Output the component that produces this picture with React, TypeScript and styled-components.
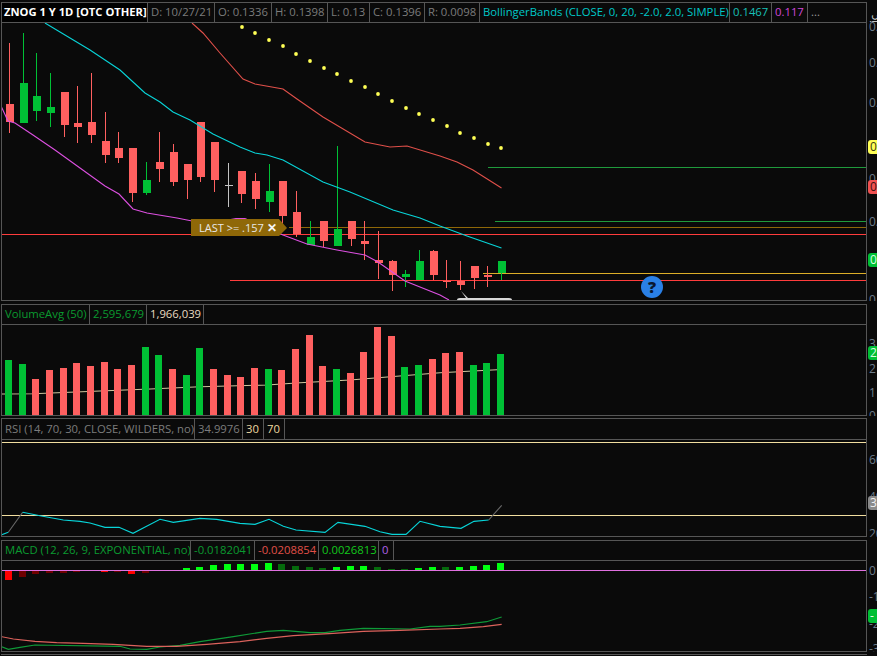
import React from 'react'
import styled, { createGlobalStyle } from 'styled-components'

const RED = '#ff6060'
const GREEN = '#00c035'
const DOJI = '#c4c4c4'
const LINE = '#565656'

const GlobalStyle = createGlobalStyle`
  html, body {
    margin: 0;
    padding: 0;
    background: #0a0a0a;
    overflow: hidden;
  }
`

const Screen = styled.div`
  width: 877px;
  height: 656px;
  padding: 2px 0 0 1px;
  box-sizing: border-box;
  background: #0a0a0a;
  font-family: "Open Sans", "Liberation Sans", sans-serif;
  font-size: 11.3px;
  overflow: hidden;
`

const Row = styled.div<{ $height: number; $gap: number }>`
  display: flex;
  height: ${p => p.$height}px;
  margin-bottom: ${p => p.$gap}px;
`

const Pane = styled.div`
  width: 866px;
  box-sizing: border-box;
  display: flex;
  flex-direction: column;
  border: 1px solid ${LINE};
`

const Legend = styled.div<{ $height: number; $line?: number }>`
  display: flex;
  flex: none;
  height: ${p => p.$height}px;
  line-height: ${p => p.$line ?? 18}px;
  border-bottom: 1px solid ${LINE};
  box-sizing: border-box;
`

const Cell = styled.div<{ $w: number; $color?: string; $title?: boolean; $open?: boolean }>`
  flex: none;
  width: ${p => p.$w}px;
  box-sizing: border-box;
  padding-left: ${p => (p.$title ? 2 : 3)}px;
  white-space: nowrap;
  overflow: hidden;
  color: ${p => p.$color ?? '#7c7c7c'};
  font-weight: ${p => (p.$title ? 700 : 400)};
  font-size: ${p => (p.$title ? '11.2px' : 'inherit')};
  background: ${p => (p.$title ? '#000' : 'transparent')};
  border-right: ${p => (p.$open ? 'none' : `1px solid ${LINE}`)};
`

const Plot = styled.div`
  position: relative;
  flex: 1;
  min-height: 0;
  overflow: hidden;

  svg {
    display: block;
    width: 864px;
    height: 100%;
  }
`

const AlertTag = styled.div`
  position: absolute;
  left: 189px;
  top: 196px;
  width: 96px;
  height: 17px;
  padding-left: 8px;
  box-sizing: border-box;
  display: flex;
  align-items: center;
  gap: 3px;
  background: #8f6808;
  color: #e8e8e8;
  font-size: 11px;
  line-height: 17px;
  clip-path: polygon(0 0, 88px 0, 96px 9px, 88px 17px, 0 17px);
`

const TagClose = styled.span`
  color: #f6f6f6;
  font-size: 12px;
  font-weight: 700;
`

const HelpBadge = styled.div`
  position: absolute;
  left: 639px;
  top: 253px;
  width: 22px;
  height: 22px;
  border-radius: 50%;
  background: #2a80e6;
  color: #0a1830;
  font-size: 16px;
  font-weight: 800;
  line-height: 22px;
  text-align: center;
`

const Axis = styled.div`
  position: relative;
  width: 10px;
  overflow: hidden;
  flex: none;
  font-size: 12px;
`

const Tick = styled.span<{ $y: number }>`
  position: absolute;
  left: 2px;
  top: ${p => p.$y}px;
  line-height: 14px;
  color: #6d7c8a;
  white-space: nowrap;
`

const Pin = styled.span<{ $y: number; $bg: string; $fg: string }>`
  position: absolute;
  left: 1px;
  top: ${p => p.$y}px;
  width: 16px;
  height: 14px;
  padding-left: 2px;
  box-sizing: border-box;
  border-radius: 3px;
  background: ${p => p.$bg};
  color: ${p => p.$fg};
  line-height: 14px;
`

const SideLabel = styled.span`
  position: absolute;
  left: 1px;
  top: 3px;
  color: #e6e6e6;
  font-size: 11px;
  line-height: 11px;
  transform: rotate(-90deg) translateX(-6px);
  transform-origin: 6px 6px;
`

const BottomRule = styled.div`
  width: 866px;
  border-top: 1px solid ${LINE};
`

type Candle = [number, number, number, number, string]

// high, low, body top, body bottom, colour (page pixels)
const candles: Candle[] = [
  [43, 133, 104, 122, RED],
  [33, 123, 83, 123, GREEN],
  [53, 121, 96, 111, GREEN],
  [73, 127, 107, 113, GREEN],
  [92, 137, 92, 125, RED],
  [86, 143, 123, 127, RED],
  [73, 143, 122, 135, RED],
  [112, 163, 141, 155, RED],
  [132, 163, 148, 158, RED],
  [148, 202, 148, 193, RED],
  [162, 195, 180, 193, GREEN],
  [132, 182, 162, 169, RED],
  [144, 186, 152, 182, RED],
  [164, 199, 164, 180, RED],
  [122, 182, 122, 177, RED],
  [142, 192, 142, 180, RED],
  [163, 207, 185, 186, DOJI],
  [171, 203, 171, 194, RED],
  [173, 209, 181, 199, RED],
  [164, 212, 191, 202, GREEN],
  [181, 225, 181, 216, RED],
  [191, 237, 212, 234, RED],
  [221, 245, 237, 245, GREEN],
  [221, 247, 221, 241, RED],
  [146, 246, 229, 246, GREEN],
  [221, 246, 221, 239, RED],
  [221, 260, 241, 244, RED],
  [231, 279, 260, 263, RED],
  [260, 291, 261, 275, RED],
  [270, 287, 274, 277, GREEN],
  [250, 280, 261, 280, GREEN],
  [250, 280, 251, 275, RED],
  [260, 288, 281, 282, RED],
  [261, 290, 281, 285, RED],
  [266, 289, 266, 278, RED],
  [266, 287, 275, 277, RED],
  [261, 280, 261, 273, GREEN],
]

const volumeTops = [
  360, 364, 379, 370, 368, 363, 366, 362, 369, 365, 347, 355, 369, 375, 348, 369, 375, 377, 368,
  369, 370, 349, 335, 366, 369, 373, 352, 327, 336, 367, 365, 359, 353, 352, 365, 363, 354,
]
const volumeColors = 'GGRRRRRRRRGGRGGRRRRGRRRRGRRRRGGRRRGGG'

// signed height above the zero line, bright or dark shade
const macdBars: [number, boolean][] = [
  [-10, true], [-7, false], [-4, false], [-3, false], [-3, false], [-2, false], [-1, false],
  [-2, true], [-2, false], [-4, true], [-3, false], [-1, false], [0, false], [2, true], [3, true],
  [5, true], [6, true], [6, true], [6, true], [7, true], [6, false], [4, false], [3, false],
  [2, false], [3, true], [4, true], [4, true], [3, false], [1, false], [1, false], [2, true],
  [3, true], [3, false], [3, true], [4, true], [5, true], [7, true],
]

const slot = (i: number) => 13.67 * i

const pts = (list: number[][]) => list.map(p => p.join(',')).join(' ')

const zoomPts = (list: number[][], ox: number, oy: number) =>
  pts(list.map(([x, y]) => [ox + x / 3, oy + y / 3]))

const upperBand = [
  [192, 23], [203, 33], [220, 53], [243, 79], [255, 84], [283, 89], [297, 99], [323, 117], [365, 142],
  [390, 147], [407, 146], [440, 156], [457, 162], [473, 170], [501.5, 188],
]
const midBand = [
  [45, 23], [65, 35], [90, 50], [105, 60], [120, 70], [145, 93], [160, 102], [173, 112], [190, 120],
  [213, 134], [240, 147], [255, 153], [267, 155], [283, 160], [323, 182], [350, 192], [393, 210],
  [420, 218], [440, 226], [467, 236], [501.5, 248],
]
const lowerBand = [
  [1, 106], [8, 121], [15, 123], [33, 135], [55, 150], [105, 186], [119, 194], [133, 209], [147, 213],
  [177, 218], [192, 221], [228, 220], [236, 218.5], [245, 218.5], [283, 235], [307, 244], [337, 250], [365, 255],
  [378, 262], [405, 281], [440, 295], [449, 300],
]
const sarDots = [
  [242, 27], [255, 33], [269, 40], [283, 46], [296, 54], [310, 61], [324, 68], [337, 74], [351, 81],
  [365, 87], [378, 94], [392, 101], [406, 108], [419, 114], [433, 120], [447, 126], [460, 133],
  [474, 138], [488, 144], [501, 148],
]

const priceLines: [number, number, string][] = [
  [167.5, 488, '#1f9a3c'],
  [221.5, 495, '#1f9a3c'],
  [227.5, 289, '#8f6808'],
  [234.5, 2, '#ff3c3c'],
  [273.5, 483, '#dcae28'],
  [280.5, 230, '#ff3c3c'],
]

const volumeAvg = [
  [0, 394], [33, 393.7], [100, 391], [150, 389], [200, 386.7], [267, 385], [300, 382.7], [350, 380],
  [440, 372.7], [497, 369.7],
]

const rsiLeft = [
  [68, 277], [120, 287], [190, 300], [240, 304], [270, 309], [315, 322], [357, 322], [399, 340],
  [480, 298], [520, 307], [600, 295], [650, 298], [720, 310], [765, 313], [807, 298], [850, 319],
  [888, 330], [975, 337], [1014, 307], [1095, 319], [1140, 335], [1176, 343], [1218, 343], [1260, 304],
  [1320, 319], [1383, 325], [1422, 304], [1466, 300],
]

const macdGreen = [
  [0, 333], [25, 343], [60, 337], [105, 330], [360, 334], [390, 342], [440, 343], [480, 336], [540, 331],
  [600, 320], [700, 305], [800, 289], [850, 286], [930, 293], [975, 293], [1020, 286], [1090, 280],
  [1150, 281], [1230, 282], [1290, 274], [1320, 274], [1380, 270], [1460, 260], [1505, 246],
]
const macdRed = [
  [0, 304], [40, 312], [105, 319], [170, 323], [250, 325], [340, 328], [440, 334], [530, 334], [620, 328],
  [720, 320], [800, 310], [880, 302], [1000, 295], [1090, 289], [1200, 286], [1320, 282], [1380, 280],
  [1450, 275], [1505, 268],
]

const Trace: React.FC<{ points: string; color: string; width?: number }> = ({ points, color, width = 1.1 }) => (
  <polyline points={points} fill="none" stroke={color} strokeWidth={width} />
)

const PriceChart: React.FC = () => (
  <svg viewBox="2 23 864 277" preserveAspectRatio="none">
    {priceLines.map(([y, x, c]) => (
      <rect key={y} x={x} y={y - 0.5} width={866 - x} height={1} fill={c} shapeRendering="crispEdges" />
    ))}
    <g shapeRendering="crispEdges">
      {candles.map(([hi, lo, top, bot, c], i) => (
        <g key={i} fill={c}>
          <rect x={Math.round(9 + slot(i))} y={hi} width={1} height={lo - hi} />
          <rect x={Math.round(6 + slot(i))} y={top} width={8} height={Math.max(bot - top, 1)} />
        </g>
      ))}
    </g>
    <Trace points={pts(upperBand)} color="#e0504a" />
    <Trace points={pts(midBand)} color="#08d4d8" />
    <Trace points={pts(lowerBand)} color="#dc50e0" />
    {sarDots.map(([x, y]) => (
      <circle key={x} cx={x} cy={y} r={1.9} fill="#ffff55" />
    ))}
    <path d="M457 300 Q457 298 460 298 L466 298 L461 291 L468 298 L509 298 Q512 298 512 300 Z" fill="#d8d8d8" />
  </svg>
)

const VolumeChart: React.FC = () => (
  <svg viewBox="2 325 864 90" preserveAspectRatio="none">
    <Trace points={pts(volumeAvg)} color="#cfc49c" />
    <g shapeRendering="crispEdges">
      {volumeTops.map((top, i) => (
        <rect
          key={i}
          x={Math.round(5 + slot(i))}
          y={top}
          width={7}
          height={415 - top}
          fill={volumeColors[i] === 'G' ? GREEN : RED}
        />
      ))}
    </g>
  </svg>
)

const RsiChart: React.FC = () => (
  <svg viewBox="2 440 864 96" preserveAspectRatio="none">
    <g fill="#f2dea0" shapeRendering="crispEdges">
      <rect x={2} y={442} width={864} height={1} />
      <rect x={2} y={515} width={864} height={1} />
    </g>
    <Trace points="1,535 8.3,532.3" color="#08d4d8" />
    <Trace points="8.3,532.3 22.7,512.3" color="#6a6a6a" />
    <Trace points={zoomPts(rsiLeft, 0, 420)} color="#08d4d8" />
    <Trace points="488.7,520 501.7,505.3" color="#6a6a6a" />
  </svg>
)

const MacdChart: React.FC = () => (
  <svg viewBox="2 561 864 90" preserveAspectRatio="none">
    <g shapeRendering="crispEdges">
      {macdBars.map(([h, bright], i) =>
        h === 0 ? null : (
          <rect
            key={i}
            x={Math.round(5 + slot(i))}
            y={h > 0 ? 570 - h : 570}
            width={7}
            height={Math.abs(h)}
            fill={h > 0 ? (bright ? '#00ff10' : '#056a0c') : bright ? '#ff0000' : '#6e0000'}
          />
        ),
      )}
      <rect x={2} y={570} width={864} height={1} fill="#e070e0" />
    </g>
    <Trace points={zoomPts(macdGreen, 0, 535)} color="#0f9a38" />
    <Trace points={zoomPts(macdRed, 0, 535)} color="#dc625c" />
  </svg>
)

const App: React.FC = () => (
  <>
    <GlobalStyle />
    <Screen>
      <Row $height={299} $gap={3}>
        <Pane>
          <Legend $height={20}>
            <Cell $w={146} $color="#fff" $title>ZNOG 1 Y 1D [OTC OTHER]</Cell>
            <Cell $w={67}>D: 10/27/21</Cell>
            <Cell $w={57}>O: 0.1336</Cell>
            <Cell $w={56}>H: 0.1398</Cell>
            <Cell $w={42}>L: 0.13</Cell>
            <Cell $w={55}>C: 0.1396</Cell>
            <Cell $w={55}>R: 0.0098</Cell>
            <Cell $w={250} $color="#00c8c8">BollingerBands (CLOSE, 0, 20, -2.0, 2.0, SIMPLE)</Cell>
            <Cell $w={42} $color="#18c0b8">0.1467</Cell>
            <Cell $w={36} $color="#d048d8">0.117</Cell>
            <Cell $w={20} $color="#9a9a9a" $open>...</Cell>
          </Legend>
          <Plot>
            <PriceChart />
            <AlertTag>
              LAST &gt;= .157
              <TagClose>✕</TagClose>
            </AlertTag>
            <HelpBadge>?</HelpBadge>
          </Plot>
        </Pane>
        <Axis>
          <SideLabel>ic</SideLabel>
          <Tick $y={18}>0.</Tick>
          <Tick $y={54}>0.</Tick>
          <Tick $y={94}>0.</Tick>
          <Pin $y={138} $bg="#ffff55" $fg="#3a3a10">0</Pin>
          <Tick $y={170}>0.</Tick>
          <Pin $y={178} $bg="#f05050" $fg="#3a1010">0</Pin>
          <Tick $y={213}>0.</Tick>
          <Pin $y={251} $bg="#00c035" $fg="#d8ffe0">0</Pin>
          <Tick $y={291}>0</Tick>
        </Axis>
      </Row>

      <Row $height={112} $gap={2}>
        <Pane>
          <Legend $height={20}>
            <Cell $w={88} $color="#0a9a30">VolumeAvg (50)</Cell>
            <Cell $w={57} $color="#0a9a30">2,595,679</Cell>
            <Cell $w={57} $color="#e8dcc0">1,966,039</Cell>
          </Legend>
          <Plot>
            <VolumeChart />
          </Plot>
        </Pane>
        <Axis>
          <Tick $y={33}>3</Tick>
          <Pin $y={42} $bg="#00c035" $fg="#d8ffe0">2</Pin>
          <Tick $y={58}>2</Tick>
          <Tick $y={82}>1</Tick>
          <Tick $y={105}>0</Tick>
        </Axis>
      </Row>

      <Row $height={119} $gap={3}>
        <Pane>
          <Legend $height={21} $line={20}>
            <Cell $w={193}>RSI (14, 70, 30, CLOSE, WILDERS, no)</Cell>
            <Cell $w={48}>34.9976</Cell>
            <Cell $w={21} $color="#eed8a0">30</Cell>
            <Cell $w={21} $color="#eed8a0">70</Cell>
          </Legend>
          <Plot>
            <RsiChart />
          </Plot>
        </Pane>
        <Axis>
          <Tick $y={35}>60</Tick>
          <Tick $y={72}>40</Tick>
          <Pin $y={78} $bg="#8a8a8a" $fg="#f0f0f0">3</Pin>
          <Tick $y={109}>20</Tick>
        </Axis>
      </Row>

      <Row $height={112} $gap={2}>
        <Pane>
          <Legend $height={20}>
            <Cell $w={189} $color="#0a9a30">MACD (12, 26, 9, EXPONENTIAL, no)</Cell>
            <Cell $w={64} $color="#0a9a30">-0.0182041</Cell>
            <Cell $w={64} $color="#e05048">-0.0208854</Cell>
            <Cell $w={60} $color="#12c81c">0.0026813</Cell>
            <Cell $w={15} $color="#b060e8">0</Cell>
          </Legend>
          <Plot>
            <MacdChart />
          </Plot>
        </Pane>
        <Axis>
          <Tick $y={24}>0</Tick>
          <Tick $y={50}>-1</Tick>
          <Tick $y={77}>-2</Tick>
          <Pin $y={69} $bg="#00c035" $fg="#e8ffe8">-</Pin>
          <Tick $y={102}>-3</Tick>
        </Axis>
      </Row>

      <BottomRule />
    </Screen>
  </>
)

export default App
